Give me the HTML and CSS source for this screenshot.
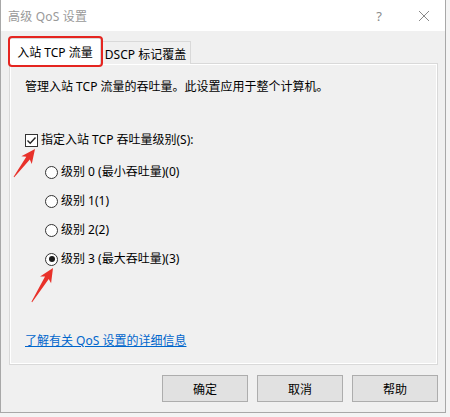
FILE: index.html
```html
<!DOCTYPE html>
<html lang="zh-CN">
<head>
<meta charset="utf-8">
<title>高级 QoS 设置</title>
<link rel="stylesheet" href="styles.css">
</head>
<body>
<div class="window">
  <div class="titlebar">
    <span class="title">高级 QoS 设置</span>
    <span class="help">?</span>
    <span class="close"><svg width="12" height="12" viewBox="0 0 12 12"><path d="M1 1L11 11M11 1L1 11" stroke="#8a8a8a" stroke-width="1" fill="none"/></svg></span>
  </div>
  <div class="client">
    <div class="tabs">
      <div class="tab active">入站 TCP 流量</div>
      <div class="tab">DSCP 标记覆盖</div>
    </div>
    <div class="panel">
      <p class="desc">管理入站 TCP 流量的吞吐量。此设置应用于整个计算机。</p>
      <div class="check">
        <span class="box"><svg width="11" height="11" viewBox="0 0 11 11"><path d="M1.5 5.5L4.2 8.2L9.5 2.6" stroke="#222" stroke-width="1.4" fill="none"/></svg></span>
        <span>指定入站 TCP 吞吐量级别(S):</span>
      </div>
      <div class="radios">
        <div class="radio"><span class="dot"></span><span>级别 0 (最小吞吐量)(0)</span></div>
        <div class="radio"><span class="dot"></span><span>级别 1(1)</span></div>
        <div class="radio"><span class="dot"></span><span>级别 2(2)</span></div>
        <div class="radio"><span class="dot on"></span><span>级别 3 (最大吞吐量)(3)</span></div>
      </div>
      <a class="link" href="#">了解有关 QoS 设置的详细信息</a>
    </div>
    <div class="buttons">
      <button class="btn">确定</button>
      <button class="btn">取消</button>
      <button class="btn">帮助</button>
    </div>
  </div>
  <div class="mark"></div>
  <svg class="arrows" width="450" height="417" viewBox="0 0 450 417">
    <g transform="translate(35 149) rotate(-53)">
      <polygon points="0,0 -14,-6.5 -11.5,-2.2 -35,-0.4 -35,0.4 -11.5,2.2 -14,6.5" fill="#e8312a"/>
    </g>
    <g transform="translate(53 268) rotate(-58)">
      <polygon points="0,0 -14,-6.5 -11.5,-2.2 -40,-0.4 -40,0.4 -11.5,2.2 -14,6.5" fill="#e8312a"/>
    </g>
  </svg>
</div>
</body>
</html>
```

FILE: styles.css
```css
* { box-sizing: border-box; }
html, body { margin: 0; padding: 0; }
body {
  width: 450px;
  height: 417px;
  background: #f4f4f4;
  font-family: "Noto Sans", "Noto Sans CJK SC", sans-serif;
  font-size: 12px;
  color: #000;
  overflow: hidden;
}
.window {
  position: relative;
  width: 446px;
  height: 413px;
  background: #f0f0f0;
  border-left: 1px solid #a8a8a8;
  border-right: 1px solid #a8a8a8;
  border-bottom: 1px solid #a8a8a8;
}
.titlebar {
  height: 31px;
  background: #fff;
  display: flex;
  align-items: center;
  padding-left: 7px;
  color: #999;
}
.title { flex: 1; letter-spacing: 0.2px; }
.help { width: 14px; text-align: center; margin-right: 32px; color: #8a8a8a; font-size: 13px; }
.close { width: 12px; height: 12px; margin-right: 15px; display: flex; }
.client { padding: 0 7px 0 8px; }
.tabs {
  height: 33px;
  display: flex;
  align-items: flex-end;
}
.tab {
  height: 23px;
  width: 91px;
  border: 1px solid #d9d9d9;
  border-bottom: none;
  display: flex;
  align-items: center;
  justify-content: center;
  background: #f0f0f0;
  margin-left: -1px;
  padding-top: 1px;
}
.tab.active {
  height: 26px;
  width: 92px;
  margin-left: 0;
  background: #fff;
  padding-top: 0;
  position: relative;
  z-index: 1;
}
.panel {
  height: 302px;
  border: 1px solid #d9d9d9;
  background: #f0f0f0;
  box-shadow: inset 1px 1px 0 #fff, inset -1px -1px 0 #fff;
  margin-top: -1px;
  padding: 15px 0 0 15px;
  display: flex;
  flex-direction: column;
  align-items: flex-start;
}
.desc { margin: 0; line-height: 16px; }
.check {
  margin-top: 37px;
  display: flex;
  align-items: center;
  gap: 3px;
  line-height: 16px;
}
.box {
  width: 13px;
  height: 13px;
  border: 1px solid #333;
  background: #fff;
  display: flex;
  align-items: center;
  justify-content: center;
}
.radios {
  margin-top: 16px;
  padding-left: 20px;
  display: flex;
  flex-direction: column;
  gap: 13px;
}
.radio {
  display: flex;
  align-items: center;
  gap: 3px;
  line-height: 16px;
}
.dot {
  width: 13px;
  height: 13px;
  border: 1px solid #333;
  border-radius: 50%;
  background: #fff;
  position: relative;
}
.dot.on::after {
  content: "";
  position: absolute;
  left: 2.5px;
  top: 2.5px;
  width: 6px;
  height: 6px;
  border-radius: 50%;
  background: #1a1a1a;
}
.link {
  margin-top: 66px;
  color: #0066cc;
  text-decoration: underline;
  line-height: 16px;
}
.buttons {
  margin-top: 10px;
  display: flex;
  justify-content: flex-end;
  gap: 9px;
  padding-right: 0;
}
.btn {
  width: 86px;
  height: 27px;
  background: #e1e1e1;
  border: 1px solid #adadad;
  font-family: inherit;
  font-size: 12px;
  color: #000;
  padding: 0;
}
.mark {
  position: absolute;
  left: 7px;
  top: 36px;
  width: 95px;
  height: 31px;
  border: 2.5px solid #e52520;
  border-radius: 4px;
  z-index: 2;
}
.arrows {
  position: absolute;
  left: -1px;
  top: 0;
  pointer-events: none;
  z-index: 3;
}
```
